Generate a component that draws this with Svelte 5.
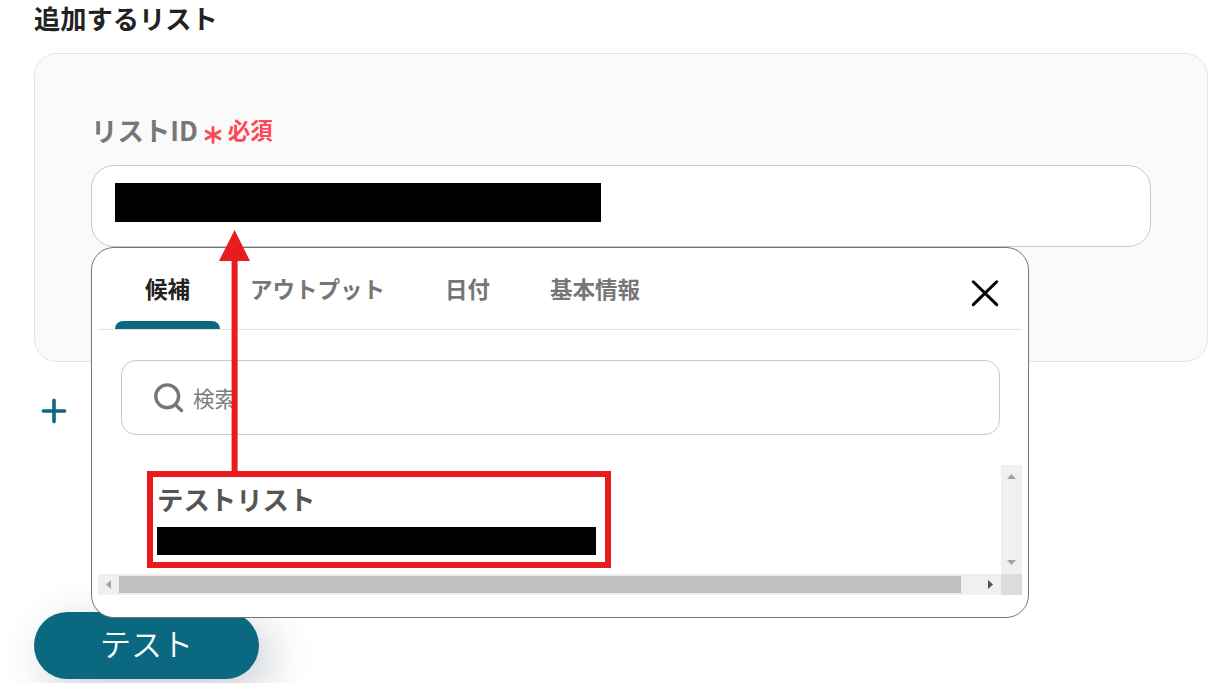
<script>
  let tabs = ['候補', 'アウトプット', '日付', '基本情報']
  let active = $state('候補')
  let query = $state('')
  let open = $state(true)
</script>

<main class="page">
  <h2>追加するリスト</h2>

  <section class="panel">
    <div class="label">
      <span class="name">リストID</span>
      <svg class="asterisk" viewBox="0 0 18 18" aria-hidden="true">
        <path d="M9 1.5v15M2 5.2l14 7.6M16 5.2L2 12.8" />
      </svg>
      <span class="required">必須</span>
    </div>

    <div class="field">
      <div class="field-value"></div>

      {#if open}
        <div class="popup">
          <div class="tabs">
            {#each tabs as tab}
              <button class="tab" class:active={tab === active} onclick={() => (active = tab)}>{tab}</button>
            {/each}
            <button class="close" aria-label="閉じる" onclick={() => (open = false)}>
              <svg viewBox="0 0 28 28"><path d="M2.3 2.8l23.4 22.8M25.7 2.8L2.3 25.6" /></svg>
            </button>
          </div>

          <label class="search">
            <svg viewBox="0 0 30 30" aria-hidden="true">
              <circle cx="13.2" cy="13.3" r="11.4" />
              <path d="M21.3 21.5l6.2 6" />
            </svg>
            <input aria-label="検索" placeholder="検索" bind:value={query} />
          </label>

          <div class="results">
            <div class="viewport">
              <div class="option">
                <strong>テストリスト</strong>
                <div class="option-value"></div>
              </div>
            </div>
            <div class="vbar">
              <svg viewBox="0 0 9 5"><path d="M0 5L4.5 0L9 5z" /></svg>
              <svg viewBox="0 0 9 5"><path d="M0 0L4.5 5L9 0z" /></svg>
            </div>
            <div class="hbar">
              <svg viewBox="0 0 5 9"><path d="M5 0L0 4.5L5 9z" /></svg>
              <div class="thumb"></div>
              <svg class="enabled" viewBox="0 0 5 9"><path d="M0 0L5 4.5L0 9z" /></svg>
            </div>
            <div class="corner"></div>
          </div>
        </div>
      {/if}
    </div>
  </section>

  <button class="add" aria-label="追加">
    <svg viewBox="0 0 26 26"><path d="M13 2.4v21.2M2.4 13h21.2" /></svg>
  </button>

  <button class="test">テスト</button>

  <!-- arrow from the chosen option up to the field -->
  <svg class="arrow" viewBox="0 0 32 242" aria-hidden="true">
    <path d="M15.6 0L31 31H18.6V242H12.6V31H0z" />
  </svg>
</main>

<style>
  :global(body) {
    margin: 0;
    background: #fff;
  }

  .page {
    position: relative;
    box-sizing: border-box;
    display: flex;
    flex-direction: column;
    align-items: flex-start;
    width: 1230px;
    height: 683px;
    padding: 0 22px 0 34px;
    overflow: hidden;
    color: #222;
    font-family: 'Noto Sans CJK JP', sans-serif;
  }

  .page * {
    box-sizing: border-box;
  }

  button {
    padding: 0;
    border: 0;
    background: none;
    font: inherit;
  }

  svg {
    display: block;
    flex: none;
    fill: none;
    stroke-linecap: round;
  }

  h2 {
    height: 53px;
    margin: 0;
    font-size: 26.25px;
    font-weight: 700;
    line-height: 36px;
  }

  .panel {
    width: 1174px;
    height: 309px;
    padding: 56px;
    border: 1px solid #e4e4e4;
    border-radius: 23px;
    background: #fafafa;
  }

  .label {
    display: flex;
    align-items: center;
    height: 55px;
    padding-bottom: 17px;
    font-weight: 700;
  }

  .name {
    color: #767676;
    font-size: 26.4px;
  }

  .asterisk {
    width: 18px;
    height: 18px;
    margin: 12px 6px 0 6px;
    stroke: #ff4755;
    stroke-width: 2.8;
  }

  .required {
    color: #ff4755;
    font-size: 22.5px;
  }

  .field {
    position: relative;
    width: 1060px;
    height: 82px;
    padding: 17px 23px;
    border: 1px solid #c8c8c8;
    border-radius: 23px;
    background: #fff;
  }

  .field-value {
    width: 486px;
    height: 39px;
    background: #000;
  }

  .popup {
    position: absolute;
    z-index: 1;
    top: 81px;
    left: -1px;
    width: 938px;
    height: 371px;
    padding: 0 6px;
    border: 1px solid #757575;
    border-radius: 23px;
    background: #fff;
  }

  .tabs {
    display: flex;
    height: 82px;
    padding: 0 22px 0 17px;
    border-bottom: 1px solid #e4e4e4;
  }

  .tab {
    position: relative;
    height: 81px;
    padding: 0 30px;
    color: #767676;
    font-size: 22.5px;
    font-weight: 700;
    line-height: 81px;
  }

  .tab.active {
    color: #222;
  }

  .tab.active::after {
    content: '';
    position: absolute;
    right: 0;
    bottom: 0;
    left: 0;
    height: 8px;
    border-radius: 8px 8px 0 0;
    background: #0a6881;
  }

  .close {
    margin: 9px 1px 0 auto;
  }

  .close svg {
    width: 28px;
    height: 28px;
    stroke: #000;
    stroke-width: 3;
  }

  .search {
    display: flex;
    align-items: center;
    gap: 9px;
    width: 879px;
    height: 75px;
    margin: 30px 0 30px 23px;
    padding-left: 32px;
    border: 1px solid #c8c8c8;
    border-radius: 15px;
  }

  .search svg {
    width: 30px;
    height: 30px;
    stroke: #767676;
    stroke-width: 3.4;
  }

  .search input {
    flex: 1;
    height: 40px;
    padding: 0;
    border: 0;
    outline: 0;
    background: none;
    font: 400 21.5px 'Noto Sans CJK JP', sans-serif;
  }

  .search input::placeholder {
    color: #7c7c7c;
  }

  .results {
    display: grid;
    grid-template: 109px 21px / 903px 21px;
  }

  .viewport {
    padding: 6px 0 0 49px;
  }

  .option {
    width: 463.5px;
    height: 96.5px;
    padding: 1px 4px 0;
    border: 6px solid #e81c1c;
  }

  .option strong {
    display: block;
    height: 49px;
    color: #555;
    font-size: 26.4px;
    line-height: 42px;
  }

  .option-value {
    width: 439px;
    height: 28px;
    background: #000;
  }

  .vbar,
  .hbar {
    display: flex;
    align-items: center;
    justify-content: space-between;
    background: #f0f0f0;
  }

  .vbar {
    flex-direction: column;
    padding: 9px 0;
  }

  .vbar svg {
    width: 9px;
    height: 5px;
    fill: #a3a3a3;
  }

  .hbar {
    padding: 0 8px;
  }

  .hbar svg {
    width: 5px;
    height: 9px;
    fill: #a3a3a3;
  }

  .hbar .enabled {
    fill: #505050;
  }

  .thumb {
    width: 842px;
    height: 17px;
    margin: 0 auto 0 8px;
    background: #c1c1c1;
  }

  .corner {
    background: #dcdcdc;
  }

  .add {
    margin: 36px 0 0 7px;
  }

  .add svg {
    width: 26px;
    height: 26px;
    stroke: #0a6881;
    stroke-width: 3.6;
  }

  .test {
    width: 225px;
    height: 67px;
    margin-top: 188px;
    padding-bottom: 5px;
    border-radius: 34px;
    background: #0a6881;
    box-shadow: 12px 12px 45px rgba(20, 50, 70, 0.24);
    color: #fff;
    font-size: 31px;
    font-weight: 350;
    line-height: 62px;
  }

  .arrow {
    position: absolute;
    z-index: 2;
    top: 230px;
    left: 219px;
    width: 32px;
    height: 242px;
    fill: #e81c1c;
  }
</style>
